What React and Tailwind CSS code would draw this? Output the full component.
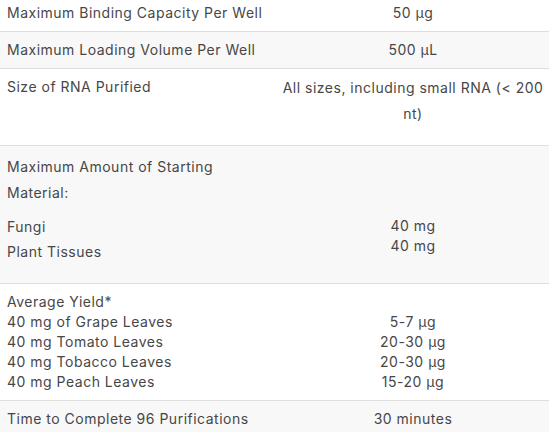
export default function App() {
  return (
    <div className="w-[549px] h-[432px] overflow-hidden bg-white text-[14px] text-[#474747] [font-family:Inter,'Open_Sans',sans-serif]">
      <div className="-mt-[5px] tracking-[0.5px]">
        {/* row 1 */}
        <div className="flex h-[37px] border-b border-[#dedede] bg-white">
          <div className="w-[277px] pl-[7px] pt-[8px] leading-[20px]">Maximum Binding Capacity Per Well</div>
          <div className="flex-1 pt-[8px] text-center leading-[20px]">50 µg</div>
        </div>
        {/* row 2 */}
        <div className="flex h-[37px] border-b border-[#dedede] bg-[#f8f8f8]">
          <div className="w-[277px] pl-[7px] pt-[8px] leading-[20px]">Maximum Loading Volume Per Well</div>
          <div className="flex-1 pt-[8px] text-center leading-[20px]">500 µL</div>
        </div>
        {/* row 3 */}
        <div className="flex h-[77px] border-b border-[#dedede] bg-white">
          <div className="w-[277px] pl-[7px] pt-[8px] leading-[20px]">Size of RNA Purified</div>
          <div className="flex-1 px-[2px] pt-[6px] text-center leading-[26px]">All sizes, including small RNA (&lt; 200 nt)</div>
        </div>
        {/* row 4 */}
        <div className="flex h-[138px] border-b border-[#dedede] bg-[#f8f8f8]">
          <div className="w-[277px] pl-[7px] pr-[10px] pt-[8px]">
            <p className="leading-[26px]">Maximum Amount of Starting Material:</p>
            <p className="mt-[8px] leading-[25px]">
              Fungi
              <br />
              Plant Tissues
            </p>
          </div>
          <div className="flex-1 pt-[70px] text-center leading-[20px]">
            40 mg
            <br />
            40 mg
          </div>
        </div>
        {/* row 5 */}
        <div className="flex h-[117px] border-b border-[#dedede] bg-white">
          <div className="w-[277px] pl-[7px] pt-[8px] leading-[20px]">
            Average Yield*
            <br />
            40 mg of Grape Leaves
            <br />
            40 mg Tomato Leaves
            <br />
            40 mg Tobacco Leaves
            <br />
            40 mg Peach Leaves
          </div>
          <div className="flex-1 pt-[28px] text-center leading-[20px]">
            5-7 µg
            <br />
            20-30 µg
            <br />
            20-30 µg
            <br />
            15-20 µg
          </div>
        </div>
        {/* row 6 */}
        <div className="flex h-[37px] border-b border-[#dedede] bg-[#f8f8f8]">
          <div className="w-[277px] pl-[7px] pt-[8px] leading-[20px]">Time to Complete 96 Purifications</div>
          <div className="flex-1 pt-[8px] text-center leading-[20px]">30 minutes</div>
        </div>
      </div>
    </div>
  );
}
